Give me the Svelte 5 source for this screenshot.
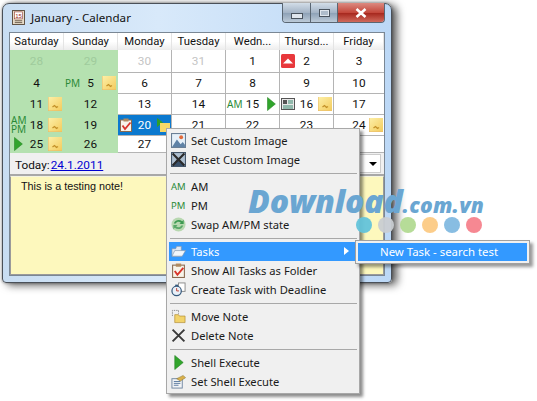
<script>
  const heads = ['Saturday','Sunday','Monday','Tuesday','Wedn...','Thursd...','Friday'];
  const rows = [
    [{n:28,g:1,d:1},{n:29,g:1,d:1},{n:30,d:1},{n:31,d:1},{n:1},{n:2,l:'up'},{n:3}],
    [{n:4,g:1},{n:5,g:1,l:'pm',r:'note'},{n:6},{n:7},{n:8},{n:9},{n:10}],
    [{n:11,g:1,r:'note'},{n:12,g:1},{n:13},{n:14},{n:15,l:'am',r:'play'},{n:16,l:'news',r:'note'},{n:17}],
    [{n:18,g:1,l:'ampm',r:'note'},{n:19,g:1},{n:20,s:1,l:'tasks',r:'playnote'},{n:21},{n:22},{n:23},{n:24,r:'note'}],
    [{n:25,g:1,l:'play',r:'note'},{n:26,g:1},{n:27},{n:''},{n:''},{n:''},{n:''}]
  ];
  const menu = [
    [{t:'Set Custom Image',i:'image'},{t:'Reset Custom Image',i:'reset'}],
    [{t:'AM',i:'am'},{t:'PM',i:'pm'},{t:'Swap AM/PM state',i:'swap'}],
    [{t:'Tasks',i:'folder',hot:1,sub:1},{t:'Show All Tasks as Folder',i:'tasks'},{t:'Create Task with Deadline',i:'clock'}],
    [{t:'Move Note',i:'move'},{t:'Delete Note',i:'del'}],
    [{t:'Shell Execute',i:'play'},{t:'Set Shell Execute',i:'shell'}]
  ];
  const dots = ['#63c3da','#c9ced2','#b2da92','#fcca84','#82b9e0','#f6828c'];
</script>

{#snippet icon(k)}
  {#if k==='note'}
    <svg class="ic" viewBox="0 0 14 14"><defs><linearGradient id="ng" x1="0" y1="0" x2="1" y2="1"><stop offset="0" stop-color="#fdf0a8"/><stop offset="1" stop-color="#f3cb5c"/></linearGradient></defs><rect width="14" height="14" fill="url(#ng)"/><path d="M0 0V14H14" fill="none" stroke="#e8b868" stroke-width="1"/><path d="M4.500 10l2-1.500 2 2 1.500 -1" stroke="#c4922a" stroke-width="1.300" fill="none"/></svg>
  {:else if k==='play'}
    <svg class="ic" viewBox="0 0 14 16"><path d="M3 0.500 L12 8 L3 15.500Z" fill="#31a52c" stroke="#1f7f1d" stroke-width="0.600"/></svg>
  {:else if k==='playnote'}
    <svg class="ic wide" viewBox="0 0 14 14"><path d="M1 0L7 4.500L1 9Z" fill="#2f9e2a"/><rect x="4" y="5" width="10" height="9" fill="#f6d868"/></svg>
  {:else if k==='up'}
    <svg class="ic" viewBox="0 0 14 14"><rect width="14" height="14" rx="1.500" fill="#e8383c"/><path d="M2 9.500L7 4.500L12 9.500Z" fill="#fff"/></svg>
  {:else if k==='news'}
    <svg class="ic" viewBox="0 0 14 14"><rect x="0.500" y="1.500" width="13" height="11" fill="#e8e8e8" stroke="#555"/><rect x="2" y="3" width="4" height="4" fill="#555"/><path d="M7 4h5M7 6h5M2 9h10M2 11h10" stroke="#3a8a70"/></svg>
  {:else if k==='tasks'}
    <svg class="ic" viewBox="0 0 14 14"><rect x="1.500" y="2" width="11" height="11.500" fill="#f8f4ea" stroke="#8a6a50"/><rect x="4.500" y="0.500" width="5" height="3" fill="#b08a60"/><path d="M3.500 7.500L6 11L11.500 4.500" stroke="#d8352c" stroke-width="1.800" fill="none"/></svg>
  {:else if k==='image'}
    <svg class="ic" viewBox="0 0 14 14"><rect x="0.500" y="0.500" width="13" height="13" fill="#e6f0f9" stroke="#6a7f96"/><circle cx="9.500" cy="4" r="1.800" fill="#e06a3a"/><path d="M1 13L5.500 6L9 10.500L11 8.500L13 11V13Z" fill="#5f82a6"/></svg>
  {:else if k==='reset'}
    <svg class="ic" viewBox="0 0 14 14"><rect x="0.500" y="0.500" width="13" height="13" fill="#aebfd0" stroke="#44566a"/><path d="M1 13L6 6L13 13Z" fill="#39506a"/><path d="M1.500 1.500L12.500 12.500M12.500 1.500L1.500 12.500" stroke="#2a2a2a" stroke-width="2"/></svg>
  {:else if k==='am'}
    <span class="ap">AM</span>
  {:else if k==='pm'}
    <span class="ap">PM</span>
  {:else if k==='ampm'}
    <span class="ap stack">AM<br>PM</span>
  {:else if k==='swap'}
    <svg class="ic" viewBox="0 0 16 16"><circle cx="8" cy="8" r="7.500" fill="#b8d8b0"/><path d="M3 7C4 3 9 2 12 4.500L13.500 3V7.500H9L10.500 6C8.500 4.500 6 5 5 7Z" fill="#3e9a52"/><path d="M13 9C12 13 7 14 4 11.500L2.500 13V8.500H7L5.500 10C7.500 11.500 10 11 11 9Z" fill="#5aa868"/></svg>
  {:else if k==='folder'}
    <svg class="ic" viewBox="0 0 16 14"><path d="M1 4H5L6 1.500H11V12H1Z" fill="#dfe8f4" stroke="#7f93ad" stroke-width="0.700"/><path d="M1 12L4 6H15.500L12 12Z" fill="#f2f6fb" stroke="#7f93ad" stroke-width="0.700"/></svg>
  {:else if k==='clock'}
    <svg class="ic" viewBox="0 0 16 16"><rect x="8" y="1" width="7" height="9" fill="#fff" stroke="#8a8a8a"/><circle cx="6" cy="9.500" r="5" fill="#e8f0f8" stroke="#34587c" stroke-width="1.300"/><rect x="4.500" y="2.800" width="3" height="1.600" fill="#34587c"/><path d="M6 6.500V9.500H8.500" stroke="#c0392b" fill="none"/></svg>
  {:else if k==='move'}
    <svg class="ic" viewBox="0 0 16 16"><path d="M1.500 7.500V1.500H8V5" fill="none" stroke="#888" stroke-dasharray="1.500 1"/><path d="M4 6H8L9 7.500H15V14.500H4Z" fill="#f2d36a" stroke="#b08a30" stroke-width="0.700"/></svg>
  {:else if k==='del'}
    <svg class="ic" viewBox="0 0 14 14"><path d="M1.500 1.500L12.500 12.500M12.500 1.500L1.500 12.500" stroke="#3a3a3a" stroke-width="1.800"/></svg>
  {:else if k==='shell'}
    <svg class="ic" viewBox="0 0 16 16"><rect x="1" y="5" width="11" height="10" fill="#f2f4f6" stroke="#6f86a0"/><path d="M3 8h7M3 10h7M3 12h5" stroke="#5a7aa0"/><path d="M6 5L13 1.500L15.500 4L10 7.500Z" fill="#d9b04a" stroke="#7a6a2a" stroke-width="0.500"/></svg>
  {/if}
{/snippet}

<div class="page">
  <div class="window">
    <div class="titlebar">
      <svg class="appicon" viewBox="0 0 14 16"><rect x="0.500" y="0.500" width="13" height="15" fill="#e8dcc8" stroke="#5a4a3a"/><rect x="2.500" y="2" width="9" height="7.500" fill="#fff" stroke="#8a2a20" stroke-width="0.600"/><text x="7" y="8.300" font-size="6.500" text-anchor="middle" fill="#a02a20" font-family="Liberation Sans">15</text><path d="M3 11.500h8M3 13.500h8" stroke="#6a5a4a"/></svg>
      <span class="title">January - Calendar</span>
      <div class="caption">
        <div class="cb min"><span class="minglyph"></span></div>
        <div class="cb max"><span class="maxglyph"></span></div>
        <div class="cb close">
          <svg viewBox="0 0 12 10" width="12" height="10"><path d="M1.500 1L10.500 9M10.500 1L1.500 9" stroke="#fff" stroke-width="2.600"/></svg>
        </div>
      </div>
    </div>
    <div class="client">
      <div class="heads">
        {#each heads as h}<div class="head">{h}</div>{/each}
      </div>
      <div class="grid">
        {#each rows as row}
          {#each row as c}
            <div class="cell" class:green={c.g} class:dim={c.d} class:sel={c.s}>
              <span class="lslot">{#if c.l}{@render icon(c.l)}{/if}</span>
              <span class="num">{c.n}</span>
              <span class="rslot">{#if c.r}{@render icon(c.r)}{/if}</span>
            </div>
          {/each}
        {/each}
      </div>
      <div class="today">
        <span>Today:</span><a href="#top">24.1.2011</a>
        <div class="combo"><span class="arrow"></span></div>
      </div>
      <div class="note">This is a testing note!</div>
    </div>
  </div>

  <div class="menu">
    {#each menu as group, gi}
      {#if gi>0}<div class="sep"></div>{/if}
      {#each group as it}
        <div class="item" class:hot={it.hot}>
          <span class="mi">{@render icon(it.i)}</span>
          <span>{it.t}</span>
          {#if it.sub}<span class="subarrow"></span>{/if}
        </div>
      {/each}
    {/each}
  </div>
  <div class="submenu"><div class="subitem">New Task - search test</div></div>

  <div class="mark"><span class="big">Download</span><span class="small">.com.vn</span></div>
  <div class="dots">{#each dots as d}<span style="background:{d}"></span>{/each}</div>
</div>

<style>
  :global(body){margin:0;background:#fff;}
  .page{position:relative;width:537px;height:401px;overflow:hidden;font-family:"Noto Sans","Liberation Sans",sans-serif;padding:3px 0 0 2px;box-sizing:border-box;}
  .window{width:390px;height:280px;box-sizing:border-box;border:1px solid #4a5058;border-radius:7px 7px 4px 4px;background:linear-gradient(90deg,#c8ddf2,#d8e9fa 40%,#bcd8f6);box-shadow:5px 2px 8px rgba(0,0,0,.65),0 0 3px rgba(0,0,0,.4);padding:0 6px 6px 6px;display:flex;flex-direction:column;}
  .titlebar{height:28px;flex:none;display:flex;align-items:flex-start;position:relative;}
  .appicon{width:13px;height:15px;margin:6px 6px 0 3px;}
  .title{font-size:11.600px;margin-top:6px;color:#111;line-height:16px;}
  .caption{position:absolute;right:0;top:-1px;display:flex;height:19px;border:1px solid #5a6672;border-top:none;border-radius:0 0 4px 4px;overflow:hidden;}
  .cb{display:flex;align-items:center;justify-content:center;}
  .min{width:27px;background:linear-gradient(#d2dde8,#a4b4c6 50%,#8fa3b8 55%,#bccad8);border-right:1px solid #5a6672;}
  .max{width:26px;background:linear-gradient(#d2dde8,#a4b4c6 50%,#8fa3b8 55%,#bccad8);border-right:1px solid #5a6672;}
  .close{width:46px;background:linear-gradient(#dc8a80,#c4483c 50%,#a82a20 55%,#d06a5c);}
  .minglyph{width:10px;height:4px;background:#dfe6ee;border:1px solid #49535e;margin-top:6px;}
  .maxglyph{width:9px;height:6px;border:1px solid #49535e;background:#aebccb;outline:1px solid #dfe6ee;outline-offset:-2px;}
  .client{width:376px;flex:1;display:flex;flex-direction:column;border:1px solid #7a8794;background:#f0f0f0;min-height:0;box-sizing:border-box;}
  .heads{display:grid;grid-template-columns:repeat(6,54px) 1fr;height:17px;background:linear-gradient(#fff 50%,#ececec);flex:none;}
  .head{font:11.300px/17px Roboto,sans-serif;text-align:center;color:#111;border-right:1px solid #e4e4e4;}
  .grid{display:grid;grid-template-columns:repeat(6,54px) 1fr;grid-template-rows:23px 21px 21px 21px 17px;background:#fff;flex:none;}
  .cell{display:grid;grid-template-columns:1fr auto 1fr;align-items:center;font:11.800px Roboto,sans-serif;color:#111;border-right:1px solid #b4b4b4;border-bottom:1px solid #b4b4b4;padding:0 1px;box-sizing:border-box;min-height:0;}
  .cell:nth-child(7n){border-right:none;}
  .green{background:#b5e1b0;border-color:#b5e1b0;}
  .dim{color:#c4c4c4;}
  .green.dim{color:#9fcb9c;}
  .sel{background:#0b79cf;color:#fff;}
  .lslot{justify-self:start;display:flex;align-items:center;}
  .rslot{justify-self:end;display:flex;align-items:center;}
  .num{padding:0 2px;}
  .ic{width:14px;height:14px;display:block;flex:none;}
  .ap{font:10px/9px "Noto Sans",sans-serif;color:#2a8a36;}
  .stack{display:block;}
  .today{height:23px;flex:none;position:relative;display:flex;align-items:center;font:11.800px Roboto,sans-serif;padding:2px 0 0 5px;box-sizing:border-box;color:#111;border-bottom:2px solid #a8a8a8;}
  .today a{color:#0000d0;margin-left:1px;}
  .combo{position:absolute;right:3px;top:1px;width:31px;height:19px;background:#fff;border:1px solid #ccc;box-sizing:border-box;}
  .arrow{position:absolute;right:3px;top:7px;border:4px solid transparent;border-top:4px solid #000;border-bottom:none;}
  .note{flex:1;background:#fdf8bd;border:1px solid #9a9a9a;border-top:1px solid #f4f4e0;font:10.800px/15px "Liberation Sans",sans-serif;padding:2px 0 0 10px;color:#111;}
  .menu{position:absolute;left:166px;top:128px;width:194px;height:266px;box-sizing:border-box;background:#f0f0f0;border:1px solid #a8a8a8;box-shadow:3px 3px 3px rgba(0,0,0,.45);padding:2px;z-index:2;}
  .item{height:19px;display:flex;align-items:center;font-size:11.200px;color:#1a1a1a;position:relative;}
  .mi{width:22px;display:flex;justify-content:flex-start;flex:none;padding-left:2px;box-sizing:border-box;}
  .item .ic{width:15px;height:15px;}
  .item .ap{font-size:9.500px;}
  .hot{background:#3399ff;color:#fff;}
  .sep{height:1px;background:#a8a8a8;margin:4px 0 3px 1px;}
  .subarrow{position:absolute;right:8px;top:5px;border:4px solid transparent;border-left:5px solid #fff;border-right:none;}
  .submenu{position:absolute;left:355px;top:240px;width:175px;height:24px;box-sizing:border-box;background:#f0f0f0;border:1px solid #a0a0a0;box-shadow:3px 3px 3px rgba(0,0,0,.4);padding:2px;z-index:3;}
  .subitem{height:18px;background:#3399ff;color:#fff;font-size:11.400px;line-height:18px;padding-left:22px;}
  .mark{position:absolute;left:248px;top:184px;z-index:4;color:#6aa6d2;font-family:"Open Sans","Liberation Sans",sans-serif;font-weight:800;font-style:italic;white-space:nowrap;}
  .big{font-size:32px;line-height:34px;letter-spacing:-.2px;}
  .small{font-size:21px;letter-spacing:.2px;}
  .dots{position:absolute;left:356px;top:217px;z-index:4;display:flex;gap:6px;}
  .dots span{width:16px;height:16px;border-radius:50%;opacity:.95;}
</style>
